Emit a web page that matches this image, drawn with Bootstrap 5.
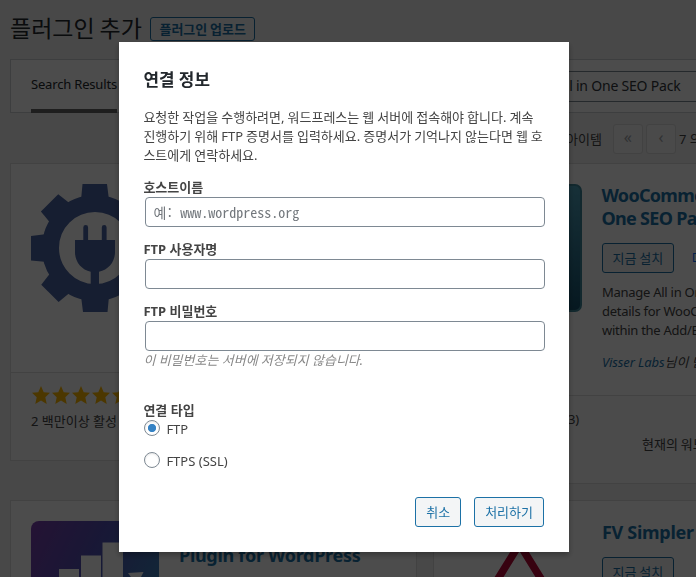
<!DOCTYPE html>
<html lang="ko">
<head>
<meta charset="utf-8">
<meta name="viewport" content="width=device-width, initial-scale=1">
<title>플러그인 추가</title>
<link href="https://cdn.jsdelivr.net/npm/bootstrap@5.3.0/dist/css/bootstrap.min.css" rel="stylesheet">
<style>
  body { background: #f1f1f1; color: #444; font: 13px/19px "Noto Sans", "Noto Sans CJK KR", sans-serif; height: 577px; }
  .admin-page { height: 577px; padding: 12px 0 0 10px; }
  .page-title { font-size: 23px; font-weight: 400; line-height: 32px; color: #23282d; word-spacing: -1px; }
  .wp-btn { --bs-btn-font-size: 13px; --bs-btn-line-height: 28px; --bs-btn-padding-y: 0; --bs-btn-padding-x: 10px;
    --bs-btn-border-radius: 3px; --bs-btn-color: #1c71a6; --bs-btn-border-color: #1c71a6; --bs-btn-bg: #f3f5f6; white-space: nowrap; word-spacing: -.6px; }
  .plugin-copy .wp-btn { --bs-btn-padding-x: 9.5px; }
  .upload-btn { --bs-btn-line-height: 22px; --bs-btn-padding-x: 8.5px; font-weight: 600; margin: 5px 0 0 8px; }
  .filter-bar { width: 820px; height: 54px; margin-top: 15px; border: 1px solid #ccd0d4; padding: 0 0 0 20px; }
  .filter-tab { flex: none; width: 86px; height: 53px; border-bottom: 4px solid #666; padding-top: 15px; color: #23282d; white-space: nowrap; letter-spacing: -.18px; }
  .search-box { width: 262px; height: 31px; margin: 11px 0 0 412px; border: 1px solid #7e8993; padding-left: 27px; font-size: 14px; line-height: 28px; letter-spacing: -.21px; color: #32373c; white-space: nowrap; }
  .pager { height: 30px; margin: 11px 0 9px 556px; gap: 3px; }
  .pager-btn { width: 30px; height: 30px; flex: none; border: 1px solid #ddd; border-radius: 3px; background: #f7f7f7; color: #a0a5aa; font-size: 16px; line-height: 25px; text-align: center; }
  .plugin-grid { display: grid; grid-template-columns: 407px 407px; column-gap: 16px; row-gap: 16px; align-items: start; }
  .plugin-card { background: #fff; border: 1px solid #ddd; }
  .plugin-top { padding: 20px; gap: 20px; height: 208px; }
  .plugin-top.tall { height: 231px; }
  .plugin-foot { border-top: 1px solid #ddd; background: #fbfbfb; height: 88px; padding: 12px 20px; white-space: nowrap; }
  .plugin-art { width: 128px; height: 128px; flex: none; }
  .plugin-name { font-size: 18px; line-height: 23px; font-weight: 700; color: #1c73a9; white-space: nowrap; margin: 0; letter-spacing: -.3px; }
  .plugin-name.tight { letter-spacing: -.7px; margin-left: -.5px; }
  .plugin-copy { white-space: nowrap; }
  .plugin-copy .desc { letter-spacing: -.27px; margin-bottom: 13px; }
  .install-row { gap: 18px; margin: 13px 0 10px; }
  .author { color: #1c73a9; letter-spacing: -.1px; }
  .active-count { margin-top: 7px; }
  .rating-count { padding: 2px 0 0 110px; }
  .compat { padding: 6px 0 0 188px; word-spacing: -.5px; }
  .second-install { margin-top: 13px; }
  .modal-backdrop.ftp-shade { --bs-backdrop-opacity: .7; }
  .ftp-dialog { width: 450px; max-width: none; margin: 42px 0 0 119px; }
  .ftp-box { height: 510px; border: 0; border-radius: 0; padding: 26px 24px 25px 24.4px; box-shadow: 0 3px 6px rgba(0,0,0,.3); color: #444; }
  .ftp-box > * { flex-shrink: 0; }
  .ftp-title { font-size: 16.9px; line-height: 24px; font-weight: 700; color: #23282d; margin: 0 0 16px; }
  .ftp-intro { margin: 0 0 13px; white-space: nowrap; word-spacing: -.35px; }
  .ftp-label { display: block; font-weight: 700; line-height: 19px; }
  .ftp-field { width: 400px; height: 30px; min-height: 0; margin: 0 0 13px 1.6px; padding: 0 7.4px; border: 1px solid #7e8993; border-radius: 4px; font: 14px/28px "Noto Sans Mono CJK KR", "Liberation Mono", monospace; color: #32373c; }
  .ftp-field::placeholder { color: #72777c; opacity: 1; }
  .ftp-radio.form-check-input { width: 16px; height: 16px; margin: 0 6.400px 0 .6px; border: 1px solid #7e8993; background: #fff; box-shadow: inset 0 1px 2px rgba(0,0,0,.1); }
  .ftp-radio.form-check-input:checked { background: radial-gradient(circle, #3582c4 0 3.7px, #fff 4.5px); border-color: #7e8993; }
  .ftp-note { color: #888; word-spacing: -.1px; }
  .ftp-type { margin-top: 31px; }
  .ftp-option { height: 16px; margin-bottom: 16px; }
  .ftp-option span { padding-top: 3px; }
  .ftp-actions { gap: 13px; margin: 13px 1px 0 0; }
</style>
<script src="https://cdn.jsdelivr.net/npm/bootstrap@5.3.0/dist/js/bootstrap.bundle.min.js"></script>
</head>
<body class="overflow-hidden">
<svg width="0" height="0" class="d-none">
  <symbol id="star" viewBox="0 0 20 20"><path d="M10 1l2.700 6.200 6.300.600-4.700 4.500L15.700 19 10 15.600 4.300 19l1.400-6.700L1 7.800l6.300-.6z"/></symbol>
</svg>
<main class="admin-page overflow-hidden">
  <header class="d-flex align-items-start">
    <h1 class="page-title m-0">플러그인 추가</h1>
    <a class="btn wp-btn upload-btn" href="#">플러그인 업로드</a>
  </header>
  <div class="filter-bar d-flex bg-white">
    <div class="filter-tab">Search Results</div>
    <div class="search-box">All in One SEO Pack</div>
  </div>
  <div class="pager d-flex align-items-center text-nowrap">
    <span class="me-2">아이템</span>
    <span class="pager-btn">«</span><span class="pager-btn">‹</span>
    <span>7 의</span>
  </div>
  <div class="plugin-grid">
    <article class="plugin-card">
      <div class="plugin-top d-flex">
        <svg class="plugin-art" viewBox="0 0 128 128" fill="#4b65a3">
          <defs><path id="tooth" d="M51.500 0h24.500l2 16h-28z"/></defs>
          <circle cx="64" cy="64" r="44.500" fill="none" stroke="#4b65a3" stroke-width="17"/>
          <use href="#tooth"/><use href="#tooth" transform="rotate(45 64 64)"/><use href="#tooth" transform="rotate(90 64 64)"/><use href="#tooth" transform="rotate(135 64 64)"/>
          <use href="#tooth" transform="rotate(180 64 64)"/><use href="#tooth" transform="rotate(225 64 64)"/><use href="#tooth" transform="rotate(270 64 64)"/><use href="#tooth" transform="rotate(315 64 64)"/>
          <path d="M44 56h8.300V43.500a2.400 2.400 0 0 1 4.800 0V56h13.700V43.500a2.400 2.400 0 0 1 4.800 0V56H84v12.500c0 9-6.500 17.500-16 19.200V103h-8.300V87.700C50.500 86 44 77.500 44 68.500z"/>
        </svg>
      </div>
      <div class="plugin-foot">
        <div class="d-flex">
          <svg width="20" height="20" fill="#ffb900"><use href="#star"/></svg><svg width="20" height="20" fill="#ffb900"><use href="#star"/></svg><svg width="20" height="20" fill="#ffb900"><use href="#star"/></svg><svg width="20" height="20" fill="#ffb900"><use href="#star"/></svg><svg width="20" height="20" fill="#ffb900"><use href="#star"/></svg>
        </div>
        <div class="active-count">2 백만이상 활성</div>
      </div>
    </article>
    <article class="plugin-card">
      <div class="plugin-top tall d-flex">
        <svg class="plugin-art" viewBox="0 0 128 128">
          <defs><linearGradient id="teal" x2="0" y2="1"><stop stop-color="#4ea3bd"/><stop offset="1" stop-color="#14506c"/></linearGradient></defs>
          <rect x="1" y="1" width="126" height="126" rx="6" fill="url(#teal)" stroke="#3f8799" stroke-width="2"/>
        </svg>
        <div class="plugin-copy">
          <h3 class="plugin-name tight">WooCommerce All in<br>One SEO Pack</h3>
          <div class="d-flex align-items-center install-row"><a class="btn wp-btn" href="#">지금 설치</a><a class="text-decoration-none" href="#">더 자세히</a></div>
          <p class="desc">Manage All in One SEO Pack<br>details for WooCommerce<br>within the Add/Edit screen.</p>
          <p class="fst-italic m-0"><span class="author">Visser Labs</span>님이 만듦</p>
        </div>
      </div>
      <div class="plugin-foot">
        <div class="rating-count">(3)</div>
        <div class="compat">현재의 워드프레스 버전과 호환됨</div>
      </div>
    </article>
    <article class="plugin-card">
      <div class="plugin-top d-flex">
        <svg class="plugin-art" viewBox="0 0 128 128">
          <defs><linearGradient id="dusk" y2=".5"><stop stop-color="#7c3fae"/><stop offset=".5" stop-color="#5050b4"/><stop offset="1" stop-color="#3d80b8"/></linearGradient></defs>
          <rect width="128" height="128" rx="8" fill="url(#dusk)"/>
          <path fill="#fff" d="M28 48h20v60H28zM50 34.500h20V108H50zM71.500 21.500H92V108H71.500zM97 52l15.500-1-5 10h-4z"/>
        </svg>
        <h3 class="plugin-name"><br>Plugin for WordPress</h3>
      </div>
    </article>
    <article class="plugin-card">
      <div class="plugin-top d-flex">
        <svg class="plugin-art" viewBox="0 0 128 128"><path d="M65.500 23L13 108h105z" fill="#fff" stroke="#b80836" stroke-width="7.600"/></svg>
        <div class="plugin-copy">
          <h3 class="plugin-name">FV Simpler SEO</h3>
          <a class="btn wp-btn second-install" href="#">지금 설치</a>
        </div>
      </div>
    </article>
  </div>
</main>
<div class="modal-backdrop ftp-shade show"></div>
<div class="modal d-block overflow-hidden" tabindex="-1" role="dialog" aria-labelledby="ftp-title">
  <div class="modal-dialog ftp-dialog">
    <form class="modal-content ftp-box">
      <h1 class="ftp-title" id="ftp-title">연결 정보</h1>
      <p class="ftp-intro">요청한 작업을 수행하려면, 워드프레스는 웹 서버에 접속해야 합니다. 계속<br>진행하기 위해 FTP 증명서를 입력하세요. 증명서가 기억나지 않는다면 웹 호<br>스트에게 연락하세요.</p>
      <label class="ftp-label" for="host">호스트이름</label>
      <input class="form-control ftp-field" id="host" placeholder="예: www.wordpress.org">
      <label class="ftp-label" for="user">FTP 사용자명</label>
      <input class="form-control ftp-field" id="user">
      <label class="ftp-label" for="pass">FTP 비밀번호</label>
      <input class="form-control ftp-field mb-0" id="pass" type="password">
      <em class="ftp-note">이 비밀번호는 서버에 저장되지 않습니다.</em>
      <div class="ftp-label ftp-type">연결 타입</div>
      <label class="d-flex align-items-center ftp-option"><input class="form-check-input ftp-radio" type="radio" name="type" checked><span>FTP</span></label>
      <label class="d-flex align-items-center ftp-option"><input class="form-check-input ftp-radio" type="radio" name="type"><span>FTPS (SSL)</span></label>
      <div class="d-flex justify-content-end ftp-actions">
        <button class="btn wp-btn" type="button">취소</button>
        <button class="btn wp-btn" type="button">처리하기</button>
      </div>
    </form>
  </div>
</div>
</body>
</html>
